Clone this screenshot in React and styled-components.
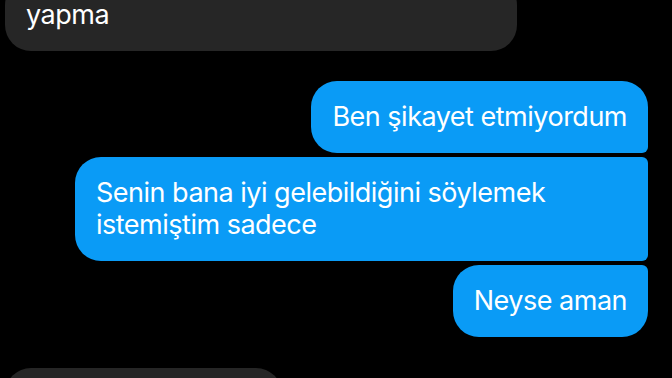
import React from "react";
import styled, { createGlobalStyle } from "styled-components";

const Global = createGlobalStyle`
  html, body { margin: 0; padding: 0; background: #000; }
  body { width: 672px; height: 378px; overflow: hidden; }
`;

const Thread = styled.div`
  display: flex;
  flex-direction: column;
  padding: 0 24px 0 5px;
  margin-top: -21px;
  font-family: Inter, "Noto Sans", sans-serif;
  font-size: 27px;
  line-height: 32px;
  color: #fff;
`;

const Group = styled.div`
  display: flex;
  flex-direction: column;
  align-items: ${(p) => (p.$sent ? "flex-end" : "flex-start")};
  gap: 4px;
  margin-top: ${(p) => p.$space || 0}px;
`;

const Bubble = styled.div`
  box-sizing: border-box;
  padding: 20px 21px;
  background: ${(p) => (p.$sent ? "#0a9bf6" : "#262626")};
  border-radius: ${(p) => p.$r || "26px"};
  width: ${(p) => (p.$w ? `${p.$w}px` : "auto")};
  min-height: 72px;
  white-space: nowrap;
  letter-spacing: -0.5px;
`;

export default function App() {
  return (
    <>
      <Global />
      <Thread>
        <Group>
          <Bubble $w={512} $r="26px">yapma</Bubble>
        </Group>
        <Group $sent $space={30}>
          <Bubble $sent $r="26px 26px 6px 26px">Ben şikayet etmiyordum</Bubble>
          <Bubble $sent $w={573} $r="26px 6px 6px 26px">
            Senin bana iyi gelebildiğini söylemek
            <br />
            istemiştim sadece
          </Bubble>
          <Bubble $sent $r="26px 6px 26px 26px">Neyse aman</Bubble>
        </Group>
        <Group $space={31}>
          <Bubble $w={277} $r="26px" aria-hidden="true" />
        </Group>
      </Thread>
    </>
  );
}
